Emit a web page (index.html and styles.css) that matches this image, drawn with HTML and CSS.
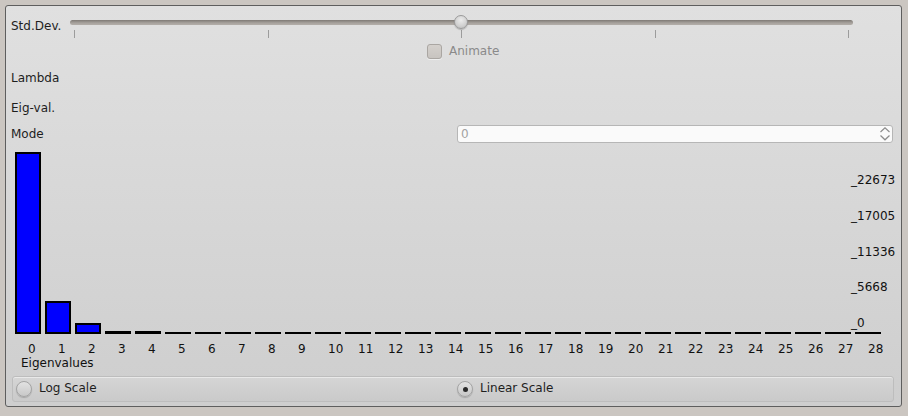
FILE: index.html
```html
<!DOCTYPE html>
<html>
<head>
<meta charset="utf-8">
<link rel="stylesheet" href="styles.css">
</head>
<body>
<div class="panel">
  <div class="row-slider">
    <span class="label std">Std.Dev.</span>
    <div class="slider">
      <div class="groove"></div>
      <div class="ticks"><i></i><i></i><i></i><i></i><i></i></div>
      <div class="handle"></div>
    </div>
  </div>
  <div class="row-animate">
    <span class="checkbox"></span><span class="animate-text">Animate</span>
  </div>
  <div class="label lambda">Lambda</div>
  <div class="label eig">Eig-val.</div>
  <div class="row-mode">
    <span class="label mode-label">Mode</span>
    <div class="spin">
      <span class="spin-val">0</span>
      <svg class="spin-arrows" width="10" height="14" viewBox="0 0 10 14">
        <path d="M0.5 5 L5 0.8 L9.5 5" />
        <path d="M0.5 8.5 L5 12.8 L9.5 8.5" />
      </svg>
    </div>
  </div>
  <svg class="chart" width="895" height="226" viewBox="6 146 895 226">
    <g class="bars">
      <rect x="16" y="153" width="24" height="180"/>
      <rect x="46" y="302" width="24" height="31"/>
      <rect x="76" y="324" width="24" height="9"/>
      <rect x="106" y="332" width="24" height="1"/>
      <rect x="136" y="332" width="24" height="1"/>
    </g>
    <g class="flat">
      <line x1="165" y1="333" x2="191" y2="333"/>
      <line x1="195" y1="333" x2="221" y2="333"/>
      <line x1="225" y1="333" x2="251" y2="333"/>
      <line x1="255" y1="333" x2="281" y2="333"/>
      <line x1="285" y1="333" x2="311" y2="333"/>
      <line x1="315" y1="333" x2="341" y2="333"/>
      <line x1="345" y1="333" x2="371" y2="333"/>
      <line x1="375" y1="333" x2="401" y2="333"/>
      <line x1="405" y1="333" x2="431" y2="333"/>
      <line x1="435" y1="333" x2="461" y2="333"/>
      <line x1="465" y1="333" x2="491" y2="333"/>
      <line x1="495" y1="333" x2="521" y2="333"/>
      <line x1="525" y1="333" x2="551" y2="333"/>
      <line x1="555" y1="333" x2="581" y2="333"/>
      <line x1="585" y1="333" x2="611" y2="333"/>
      <line x1="615" y1="333" x2="641" y2="333"/>
      <line x1="645" y1="333" x2="671" y2="333"/>
      <line x1="675" y1="333" x2="701" y2="333"/>
      <line x1="705" y1="333" x2="731" y2="333"/>
      <line x1="735" y1="333" x2="761" y2="333"/>
      <line x1="765" y1="333" x2="791" y2="333"/>
      <line x1="795" y1="333" x2="821" y2="333"/>
      <line x1="825" y1="333" x2="851" y2="333"/>
      <line x1="855" y1="333" x2="881" y2="333"/>
    </g>
    <g class="ylab">
      <text x="851" y="184">_22673</text>
      <text x="851" y="220">_17005</text>
      <text x="851" y="256">_11336</text>
      <text x="851" y="291">_5668</text>
      <text x="851" y="327">_0</text>
    </g>
    <g class="xlab">
      <text x="28" y="353">0</text>
      <text x="58" y="353">1</text>
      <text x="88" y="353">2</text>
      <text x="118" y="353">3</text>
      <text x="148" y="353">4</text>
      <text x="178" y="353">5</text>
      <text x="208" y="353">6</text>
      <text x="238" y="353">7</text>
      <text x="268" y="353">8</text>
      <text x="298" y="353">9</text>
      <text x="328" y="353">10</text>
      <text x="358" y="353">11</text>
      <text x="388" y="353">12</text>
      <text x="418" y="353">13</text>
      <text x="448" y="353">14</text>
      <text x="478" y="353">15</text>
      <text x="508" y="353">16</text>
      <text x="538" y="353">17</text>
      <text x="568" y="353">18</text>
      <text x="598" y="353">19</text>
      <text x="628" y="353">20</text>
      <text x="658" y="353">21</text>
      <text x="688" y="353">22</text>
      <text x="718" y="353">23</text>
      <text x="748" y="353">24</text>
      <text x="778" y="353">25</text>
      <text x="808" y="353">26</text>
      <text x="838" y="353">27</text>
      <text x="868" y="353">28</text>
      <text x="21" y="367">Eigenvalues</text>
    </g>
  </svg>
  <div class="radio-group">
    <label class="radio-item"><span class="radio"></span><span>Log Scale</span></label>
    <label class="radio-item"><span class="radio checked"></span><span>Linear Scale</span></label>
  </div>
</div>
</body>
</html>
```

FILE: styles.css
```css
html, body {
  margin: 0;
}
body {
  padding: 5px;
  background: #cbc6c1;
  font-family: "DejaVu Sans", "Noto Sans", sans-serif;
  font-size: 12px;
  line-height: 14px;
  color: #1e1e1e;
}
.panel {
  box-sizing: border-box;
  width: 897px;
  height: 402px;
  border: 1px solid #5e5e5e;
  border-radius: 3px;
  background: linear-gradient(#e0e0e0, #cecece);
  overflow: hidden;
}
.label {
  display: block;
  padding-left: 5px;
}
.row-slider {
  display: flex;
  height: 34px;
}
.std {
  box-sizing: border-box;
  width: 64px;
  padding-top: 13px;
}
.slider {
  position: relative;
  width: 783px;
}
.groove {
  margin-top: 14px;
  height: 5px;
  border-radius: 3px;
  background: linear-gradient(#7f7a75, #a7a29d 60%, #b3aea9);
}
.ticks {
  display: flex;
  justify-content: space-between;
  margin: 5px 0 0 4px;
  width: 775px;
  height: 8px;
}
.ticks i {
  width: 1px;
  background: #9c9c9c;
}
.handle {
  position: absolute;
  left: 384px;
  top: 9px;
  box-sizing: border-box;
  width: 14px;
  height: 14px;
  border-radius: 50%;
  border: 1px solid #9a9a9a;
  background: radial-gradient(circle at 50% 35%, #ececec, #d0d0d0 60%, #b9b9b9);
  box-shadow: 0 1px 1px rgba(0, 0, 0, 0.2);
}
.row-animate {
  display: flex;
  align-items: center;
  gap: 7px;
  height: 22px;
  padding-left: 421px;
}
.checkbox {
  box-sizing: border-box;
  width: 15px;
  height: 15px;
  border: 1px solid #aaa6a2;
  border-radius: 3px;
  background: linear-gradient(#d4d0cc, #c8c4c0);
  box-shadow: 0 1px 0 rgba(255, 255, 255, 0.5);
}
.animate-text {
  color: #8a8a8a;
}
.lambda {
  margin-top: 9px;
}
.eig {
  margin-top: 16px;
}
.row-mode {
  display: flex;
  align-items: center;
  margin-top: 10px;
  height: 18px;
}
.mode-label {
  box-sizing: border-box;
  width: 451px;
}
.spin {
  box-sizing: border-box;
  width: 436px;
  height: 18px;
  border: 1px solid #b6b6b6;
  border-radius: 3px;
  background: #fafafa;
  display: flex;
  align-items: center;
  justify-content: space-between;
  padding: 0 2px 0 3px;
}
.spin-val {
  color: #a2a2a2;
}
.spin-arrows path {
  fill: none;
  stroke: #8c8c8c;
  stroke-width: 1.2;
}
.chart {
  display: block;
  margin-top: 3px;
}
.bars rect {
  fill: #0000ff;
  stroke: #000;
  stroke-width: 2;
}
.flat line {
  stroke: #000;
  stroke-width: 2;
}
.chart text {
  font-family: "DejaVu Sans", sans-serif;
  font-size: 12px;
  fill: #111;
}
.radio-group {
  box-sizing: border-box;
  margin: 4px 0 0 6px;
  width: 882px;
  height: 26px;
  border: 1px solid #bdbdbd;
  border-radius: 3px;
  background: linear-gradient(#d5d5d5, #cacaca);
  box-shadow: inset 0 1px 0 #e9e9e9;
  display: grid;
  grid-template-columns: 441px 1fr;
  align-items: center;
}
.radio-item {
  display: flex;
  align-items: center;
  gap: 7px;
  padding-left: 3px;
  padding-bottom: 2px;
}
.radio {
  box-sizing: border-box;
  width: 16px;
  height: 16px;
  margin-top: 2px;
  border-radius: 50%;
  border: 1px solid #a4a4a4;
  background: linear-gradient(#e2e2e2, #c8c8c8);
  box-shadow: 0 1px 1px rgba(0, 0, 0, 0.18);
  display: flex;
  align-items: center;
  justify-content: center;
}
.radio.checked::after {
  content: "";
  width: 5px;
  height: 5px;
  border-radius: 50%;
  background: #2a2a2a;
}
```
